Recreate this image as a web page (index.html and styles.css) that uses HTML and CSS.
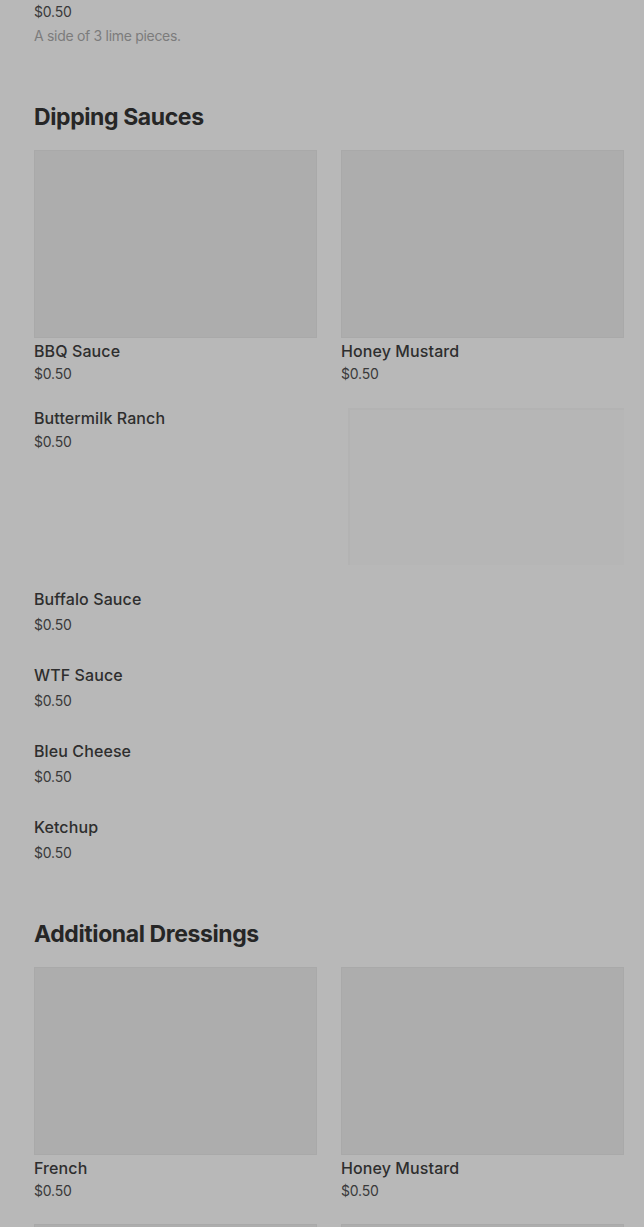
FILE: index.html
```
<!DOCTYPE html>
<html lang="en">
  <head>
    <meta charset="UTF-8" />
    <meta name="viewport" content="width=device-width, initial-scale=1.0" />
    <title>Menu</title>
    <link rel="stylesheet" href="styles.css">
  </head>
  <body>
    <div class="menu">
      <div class="item-top">
        <div class="price">$0.50</div>
        <div class="desc">A side of 3 lime pieces.</div>
      </div>

      <section class="section">
        <h2 class="section-title">Dipping Sauces</h2>
        <div class="items">
          <div class="grid">
            <div class="card">
              <div class="thumb"></div>
              <div class="name">BBQ Sauce</div>
              <div class="price">$0.50</div>
            </div>
            <div class="card">
              <div class="thumb"></div>
              <div class="name">Honey Mustard</div>
              <div class="price">$0.50</div>
            </div>
          </div>
          <div class="row-item">
            <div class="row-text">
              <div class="name">Buttermilk Ranch</div>
              <div class="price">$0.50</div>
            </div>
            <div class="ghost"></div>
          </div>
          <div class="list-item">
            <div class="name">Buffalo Sauce</div>
            <div class="price">$0.50</div>
          </div>
          <div class="list-item">
            <div class="name">WTF Sauce</div>
            <div class="price">$0.50</div>
          </div>
          <div class="list-item">
            <div class="name">Bleu Cheese</div>
            <div class="price">$0.50</div>
          </div>
          <div class="list-item">
            <div class="name">Ketchup</div>
            <div class="price">$0.50</div>
          </div>
        </div>
      </section>

      <section class="section">
        <h2 class="section-title">Additional Dressings</h2>
        <div class="items">
          <div class="grid">
            <div class="card">
              <div class="thumb"></div>
              <div class="name">French</div>
              <div class="price">$0.50</div>
            </div>
            <div class="card">
              <div class="thumb"></div>
              <div class="name">Honey Mustard</div>
              <div class="price">$0.50</div>
            </div>
            <div class="card">
              <div class="thumb"></div>
            </div>
            <div class="card">
              <div class="thumb"></div>
            </div>
          </div>
        </div>
      </section>
    </div>
  </body>
</html>
```

FILE: styles.css
```
body {
  margin: 0;
  background-color: #b8b8b8;
  font-family: "Inter", "Roboto", sans-serif;
  color: #2e2e2e;
}
.menu {
  padding: 2px 20px 0 34px;
}
.item-top {
  padding-bottom: 8px;
}
.price {
  font-size: 14px;
  line-height: 20px;
  letter-spacing: -0.2px;
  color: #3a3a3a;
}
.desc {
  margin-top: 4px;
  font-size: 14px;
  line-height: 20px;
  letter-spacing: -0.3px;
  color: #7c7c7c;
}
.name {
  font-size: 16px;
  font-weight: 500;
  line-height: 20px;
  letter-spacing: 0.1px;
  color: #2e2e2e;
}
.section {
  margin-top: 47px;
}
.section + .section {
  margin-top: 49px;
}
.section-title {
  margin: 0 0 17px;
  font-size: 23px;
  line-height: 32px;
  font-weight: 700;
  letter-spacing: -0.4px;
  color: #262626;
}
.items {
  display: flex;
  flex-direction: column;
  gap: 24px;
}
.grid {
  display: grid;
  grid-template-columns: 1fr 1fr;
  column-gap: 24px;
  row-gap: 23px;
}
.thumb {
  height: 188px;
  background-color: #adadad;
  border: 1px solid #a9a9a9;
  box-sizing: border-box;
}
.card .name {
  margin-top: 3px;
}
.card .price {
  margin-top: 3px;
}
.row-item {
  display: flex;
  gap: 8px;
}
.row-text {
  flex: 1;
}
.row-text .price {
  margin-top: 4px;
}
.ghost {
  width: 276px;
  height: 157px;
  background-color: #b6b6b6;
  border-top: 2px solid #b3b3b3;
  border-left: 2px solid #b3b3b3;
  box-sizing: border-box;
}
.list-item {
  padding-bottom: 6px;
}
.list-item .price {
  margin-top: 6px;
}
```
